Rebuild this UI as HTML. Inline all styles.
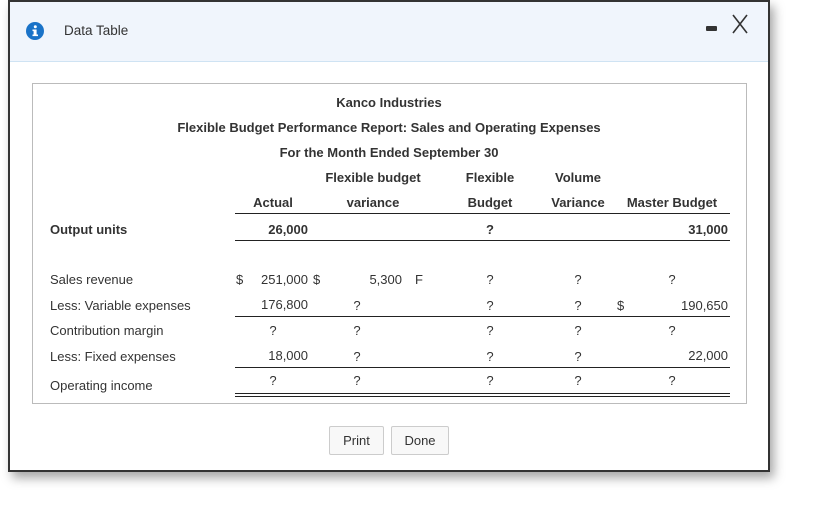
<!DOCTYPE html>
<html><head><meta charset="utf-8"><style>
*{margin:0;padding:0;box-sizing:border-box}
body{width:822px;height:518px;background:#fff;font-family:"Liberation Sans",Arial,sans-serif;font-size:13px;color:#333;position:relative;overflow:hidden}
.dlg{position:absolute;left:8px;top:0;width:762px;height:472px;border:2px solid #333;background:#fff;box-shadow:4px 6px 10px rgba(0,0,0,.35)}
.hdr{position:absolute;left:0;top:0;width:758px;height:60px;background:#f0f5fc;border-bottom:1px solid #cfe3f3}
.box{position:absolute;left:32px;top:83px;width:715px;height:321px;border:1px solid #bbb}
.t{position:absolute;line-height:14px;white-space:nowrap}
.c{transform:translateX(-50%)}
.r{transform:translateX(-100%)}
.b{font-weight:bold}
.ln{position:absolute;left:235px;width:495px;height:1px;background:#222}
.btn{position:absolute;top:426px;height:29px;border:1px solid #ccc;border-radius:2px;background:#f8f8f8;font-size:13px;line-height:27px;text-align:center;color:#333}
</style></head><body>
<div class="dlg"><div class="hdr"></div></div>
<svg style="position:absolute;left:26px;top:22px" width="18" height="18"><circle cx="9" cy="9" r="9" fill="#1a73c8"/><rect x="7.6" y="7.5" width="3" height="6.5" fill="#fff"/><rect x="6.5" y="7.5" width="2" height="1.6" fill="#fff"/><rect x="6.5" y="12.5" width="5.5" height="1.6" fill="#fff"/><circle cx="9.3" cy="4.8" r="1.5" fill="#fff"/></svg>
<div class="t" style="left:64px;top:24px;font-size:13.5px">Data Table</div>
<div style="position:absolute;left:706px;top:26px;width:11px;height:5px;background:#333;border-radius:1px"></div>
<svg style="position:absolute;left:731px;top:14px" width="18" height="20"><path d="M2 1L16 19M16 1L2 19" stroke="#333" stroke-width="1.6" fill="none"/></svg>
<div class="box"></div>
<div class="t c b" style="left:389px;top:96px">Kanco Industries</div>
<div class="t c b" style="left:389px;top:121px">Flexible Budget Performance Report: Sales and Operating Expenses</div>
<div class="t c b" style="left:389px;top:146px">For the Month Ended September 30</div>
<div class="t c b" style="left:373px;top:171px">Flexible budget</div>
<div class="t c b" style="left:490px;top:171px">Flexible</div>
<div class="t c b" style="left:578px;top:171px">Volume</div>
<div class="t c b" style="left:273px;top:196px">Actual</div>
<div class="t c b" style="left:373px;top:196px">variance</div>
<div class="t c b" style="left:490px;top:196px">Budget</div>
<div class="t c b" style="left:578px;top:196px">Variance</div>
<div class="t c b" style="left:672px;top:196px">Master Budget</div>
<div class="ln" style="top:213px"></div>
<div class="t b" style="left:50px;top:223px">Output units</div>
<div class="t r b" style="left:308px;top:223px">26,000</div>
<div class="t c b" style="left:490px;top:223px">?</div>
<div class="t r b" style="left:728px;top:223px">31,000</div>
<div class="ln" style="top:240px"></div>

<div class="t" style="left:50px;top:273px">Sales revenue</div>
<div class="t" style="left:236px;top:273px">$</div>
<div class="t r" style="left:308px;top:273px">251,000</div>
<div class="t" style="left:313px;top:273px">$</div>
<div class="t r" style="left:402px;top:273px">5,300</div>
<div class="t" style="left:415px;top:273px">F</div>
<div class="t c" style="left:490px;top:273px">?</div>
<div class="t c" style="left:578px;top:273px">?</div>
<div class="t c" style="left:672px;top:273px">?</div>

<div class="t" style="left:50px;top:299px">Less: Variable expenses</div>
<div class="t r" style="left:308px;top:298px">176,800</div>
<div class="t c" style="left:357px;top:299px">?</div>
<div class="t c" style="left:490px;top:299px">?</div>
<div class="t c" style="left:578px;top:299px">?</div>
<div class="t" style="left:617px;top:299px">$</div>
<div class="t r" style="left:728px;top:299px">190,650</div>
<div class="ln" style="top:316px"></div>

<div class="t" style="left:50px;top:324px">Contribution margin</div>
<div class="t c" style="left:273px;top:324px">?</div>
<div class="t c" style="left:357px;top:324px">?</div>
<div class="t c" style="left:490px;top:324px">?</div>
<div class="t c" style="left:578px;top:324px">?</div>
<div class="t c" style="left:672px;top:324px">?</div>

<div class="t" style="left:50px;top:350px">Less: Fixed expenses</div>
<div class="t r" style="left:308px;top:349px">18,000</div>
<div class="t c" style="left:357px;top:350px">?</div>
<div class="t c" style="left:490px;top:350px">?</div>
<div class="t c" style="left:578px;top:350px">?</div>
<div class="t r" style="left:728px;top:349px">22,000</div>
<div class="ln" style="top:367px"></div>

<div class="t" style="left:50px;top:379px">Operating income</div>
<div class="t c" style="left:273px;top:374px">?</div>
<div class="t c" style="left:357px;top:374px">?</div>
<div class="t c" style="left:490px;top:374px">?</div>
<div class="t c" style="left:578px;top:374px">?</div>
<div class="t c" style="left:672px;top:374px">?</div>
<div class="ln" style="top:393px"></div>
<div class="ln" style="top:396px"></div>

<div class="btn" style="left:329px;width:55px">Print</div>
<div class="btn" style="left:391px;width:58px">Done</div>
</body></html>
